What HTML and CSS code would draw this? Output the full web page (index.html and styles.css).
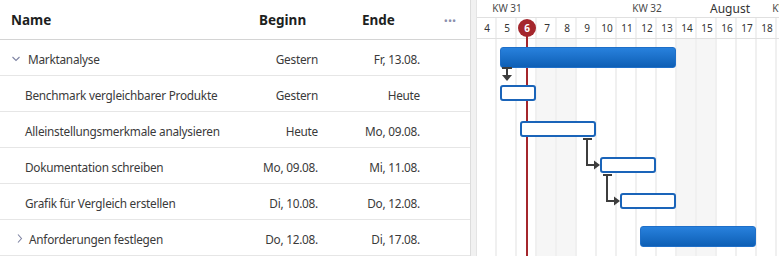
FILE: index.html
```html
<!DOCTYPE html>
<html lang="de">

<head>
  <meta charset="UTF-8">
  <meta name="viewport" content="width=device-width, initial-scale=1.0">
  <title>Gantt</title>
  <link rel="stylesheet" href="styles.css">
</head>

<body>
  <div class="gantt">
    <div class="grid">
      <div class="grid-head">
        <div class="cell name">Name</div>
        <div class="cell start">Beginn</div>
        <div class="cell end">Ende</div>
        <div class="cell more">&bull;&bull;&bull;</div>
      </div>

      <div class="row">
        <div class="cell name parent">
          <svg class="chev" width="8" height="6" viewBox="0 0 8 6"><polyline points="0.5,1 4,4.5 7.5,1" /></svg>
          Marktanalyse
        </div>
        <div class="cell date">Gestern</div>
        <div class="cell date">Fr, 13.08.</div>
        <div class="cell"></div>
      </div>
      <div class="row">
        <div class="cell name child">Benchmark vergleichbarer Produkte</div>
        <div class="cell date">Gestern</div>
        <div class="cell date">Heute</div>
        <div class="cell"></div>
      </div>
      <div class="row">
        <div class="cell name child">Alleinstellungsmerkmale analysieren</div>
        <div class="cell date">Heute</div>
        <div class="cell date">Mo, 09.08.</div>
        <div class="cell"></div>
      </div>
      <div class="row">
        <div class="cell name child">Dokumentation schreiben</div>
        <div class="cell date">Mo, 09.08.</div>
        <div class="cell date">Mi, 11.08.</div>
        <div class="cell"></div>
      </div>
      <div class="row">
        <div class="cell name child">Grafik für Vergleich erstellen</div>
        <div class="cell date">Di, 10.08.</div>
        <div class="cell date">Do, 12.08.</div>
        <div class="cell"></div>
      </div>
      <div class="row">
        <div class="cell name parent closed">
          <svg class="chev" width="6" height="9" viewBox="0 0 6 9"><polyline points="1,0.5 4.5,4.5 1,8.5" /></svg>
          Anforderungen festlegen
        </div>
        <div class="cell date">Do, 12.08.</div>
        <div class="cell date">Di, 17.08.</div>
        <div class="cell"></div>
      </div>
    </div>

    <div class="splitter"></div>

    <div class="timeline">
      <div class="tl-weeks">
        <div class="week">KW 31</div>
        <div class="week">KW 32</div>
        <div class="week">KW 33</div>
      </div>
      <div class="month">August</div>

      <div class="tl-days">
        <div class="day">4</div>
        <div class="day">5</div>
        <div class="day today"><span class="dot">6</span></div>
        <div class="day">7</div>
        <div class="day">8</div>
        <div class="day">9</div>
        <div class="day">10</div>
        <div class="day">11</div>
        <div class="day">12</div>
        <div class="day">13</div>
        <div class="day">14</div>
        <div class="day">15</div>
        <div class="day">16</div>
        <div class="day">17</div>
        <div class="day">18</div>
        <div class="day"></div>
      </div>

      <div class="tl-body">
        <div class="cols">
          <div class="col"></div>
          <div class="col"></div>
          <div class="col"></div>
          <div class="col weekend"></div>
          <div class="col weekend"></div>
          <div class="col"></div>
          <div class="col"></div>
          <div class="col"></div>
          <div class="col"></div>
          <div class="col"></div>
          <div class="col weekend"></div>
          <div class="col weekend"></div>
          <div class="col"></div>
          <div class="col"></div>
          <div class="col"></div>
          <div class="col"></div>
        </div>

        <div class="bar summary" style="left: 23px; top: 8px; width: 176px;"></div>
        <div class="bar task" style="left: 23px; top: 46px; width: 36px;"></div>
        <div class="bar task" style="left: 43px; top: 82px; width: 76px;"></div>
        <div class="bar task" style="left: 123px; top: 118px; width: 56px;"></div>
        <div class="bar task" style="left: 143px; top: 154px; width: 56px;"></div>
        <div class="bar summary" style="left: 163px; top: 187px; width: 116px;"></div>

        <svg class="links" width="302" height="217" viewBox="0 0 302 217">
          <g class="link">
            <path d="M25 29H35M30 29V37" />
            <polygon points="25,36 35,36 30,42" />
          </g>
          <g class="link">
            <path d="M106 100H115M110 100V126H118" />
            <polygon points="117,121.5 117,130.5 123,126" />
          </g>
          <g class="link">
            <path d="M126 136H135M130 136V162H138" />
            <polygon points="137,157.5 137,166.5 143,162" />
          </g>
        </svg>
      </div>

      <div class="today-line"></div>
    </div>
  </div>
</body>

</html>
```

FILE: styles.css
```css
body {
  margin: 0;
  font-family: "Noto Sans", sans-serif;
  font-size: 11.8px;
  letter-spacing: -0.25px;
  color: #3a3a3a;
  background: #fff;
}

.gantt {
  display: flex;
  height: 256px;
  overflow: hidden;
}

/* left grid */
.grid {
  width: 470px;
  flex: none;
  border-right: 1px solid #dcdcdc;
}

.grid-head,
.row {
  display: grid;
  grid-template-columns: 250px 80px 102px 38px;
  align-items: center;
}

.grid-head {
  height: 38px;
  padding-top: 1px;
  border-bottom: 1px solid #d4d4d4;
  font-size: 13.5px;
  font-weight: 700;
  letter-spacing: 0;
  color: #201f1e;
}

.grid-head .name {
  padding-left: 11px;
}

.grid-head .start {
  padding-left: 9px;
}

.grid-head .end {
  padding-left: 32px;
}

.grid-head .more {
  text-align: center;
  font-size: 11px;
  letter-spacing: 0;
  color: #8b90ad;
  font-weight: 400;
  padding-right: 2px;
}

.row {
  height: 33px;
  padding-top: 2px;
  border-bottom: 1px solid #e6e6e6;
}

.cell {
  white-space: nowrap;
  overflow: hidden;
}

.name.child {
  padding-left: 25px;
}

.name.parent {
  display: flex;
  align-items: center;
  padding-left: 12px;
  gap: 8px;
}

.name.closed {
  padding-left: 17px;
  gap: 6px;
}

.chev {
  fill: none;
  stroke: #7f84a3;
  stroke-width: 1.1;
}

.date {
  text-align: right;
  padding-right: 12px;
}

.splitter {
  width: 5px;
  flex: none;
  background: #f1f1f1;
  border-right: 1px solid #e4e4e4;
}

/* timeline */
.timeline {
  flex: 1;
  position: relative;
  overflow: hidden;
  letter-spacing: 0;
}

.tl-weeks {
  display: flex;
  height: 17px;
  margin-left: -40px;
  border-bottom: 1px solid #e0e0e0;
  font-size: 10px;
  color: #4a4a4a;
}

.week {
  flex: none;
  width: 140px;
  text-align: center;
  line-height: 17px;
}

.month {
  position: absolute;
  left: 233px;
  top: 0;
  line-height: 17px;
  font-size: 12px;
  color: #333;
}

.tl-days {
  display: flex;
  height: 20px;
  border-bottom: 1px solid #e0e0e0;
  font-size: 10px;
  color: #333;
}

.day {
  flex: none;
  width: 20px;
  text-align: center;
  line-height: 20px;
  box-shadow: inset -2px 0 #f0f0f0;
}

.dot {
  position: relative;
  z-index: 3;
  display: inline-block;
  width: 18px;
  height: 18px;
  margin-top: 1px;
  border-radius: 50%;
  background: #a4262c;
  color: #fff;
  font-weight: 700;
  line-height: 18px;
  vertical-align: top;
}

.tl-body {
  position: relative;
  height: 217px;
}

.cols {
  display: flex;
  height: 100%;
}

.col {
  flex: none;
  width: 20px;
  box-shadow: inset -2px 0 #f0f0f0;
}

.col.weekend {
  background: #f6f6f6;
}

.bar {
  position: absolute;
  z-index: 2;
  box-sizing: border-box;
  border-radius: 3px;
}

.bar.summary {
  height: 21px;
  background: linear-gradient(#2881dd, #0e5fb5);
  border: 1px solid #1f6fc8;
}

.bar.task {
  height: 16px;
  background: #fff;
  border: 2px solid #1a64b9;
}

.links {
  position: absolute;
  left: 0;
  top: 0;
  z-index: 2;
}

.link path {
  fill: none;
  stroke: #3d3d3d;
  stroke-width: 2;
}

.link polygon {
  fill: #3d3d3d;
}

.today-line {
  position: absolute;
  left: 49px;
  top: 30px;
  bottom: 0;
  width: 2px;
  background: #a4262c;
  z-index: 1;
}
```
